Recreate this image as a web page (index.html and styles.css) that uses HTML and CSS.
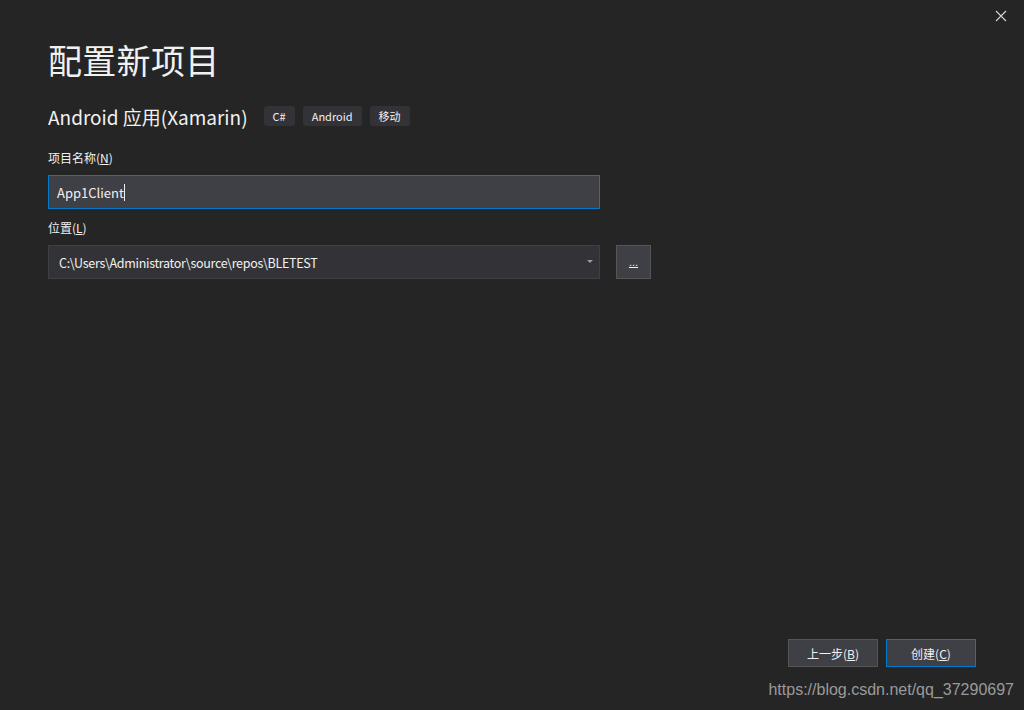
FILE: index.html
```html
<!DOCTYPE html>
<html lang="zh-CN">
<head>
    <meta charset="UTF-8">
    <title>配置新项目</title>
    <link rel="stylesheet" href="styles.css">
</head>
<body>
    <div class="dialog">
        <div class="topbar">
            <svg class="close" width="12" height="12" viewBox="0 0 12 12">
                <path d="M1 1 L11 11 M11 1 L1 11" stroke="#d0d0d0" stroke-width="1.2" fill="none"/>
            </svg>
        </div>

        <div class="content">
            <h1>配置新项目</h1>

            <div class="subtitle">
                <h2>Android 应用(Xamarin)</h2>
                <span class="tag">C#</span>
                <span class="tag">Android</span>
                <span class="tag">移动</span>
            </div>

            <div class="form-group first">
                <label>项目名称(<u>N</u>)</label>
                <div class="input active">App1Client<span class="caret"></span></div>
            </div>

            <div class="form-group">
                <label>位置(<u>L</u>)</label>
                <div class="row">
                    <div class="input combo">
                        <span>C:\Users\Administrator\source\repos\BLETEST</span>
                        <svg width="6" height="4" viewBox="0 0 6 4"><path d="M0 0 L6 0 L3 3 Z" fill="#9a9a9a"/></svg>
                    </div>
                    <button class="browse"><u>...</u></button>
                </div>
            </div>
        </div>

        <div class="footer">
            <button class="btn">上一步(<u>B</u>)</button>
            <button class="btn primary">创建(<u>C</u>)</button>
        </div>
        <div class="watermark">https://blog.csdn.net/qq_37290697</div>
    </div>
</body>
</html>
```

FILE: styles.css
```css
body {
    margin: 0;
    background-color: #252526;
    color: #f1f1f1;
    font-family: "Noto Sans CJK SC", "Noto Sans", sans-serif;
}
.dialog {
    height: 710px;
    display: flex;
    flex-direction: column;
    overflow: hidden;
}
.topbar {
    height: 32px;
    display: flex;
    justify-content: flex-end;
    align-items: center;
    padding-right: 17px;
}
.close {
    display: block;
}
.content {
    padding-left: 48px;
    flex: 1;
}
h1 {
    margin: 5px 0 0;
    font-size: 34px;
    font-weight: normal;
    line-height: 46px;
    letter-spacing: 0.3px;
}
.subtitle {
    display: flex;
    align-items: center;
    margin-top: 18px;
    height: 30px;
}
h2 {
    margin: 0 16px 0 0;
    font-size: 19px;
    font-weight: normal;
}
.tag {
    background-color: #333337;
    border-radius: 3px;
    font-size: 11px;
    padding: 0 9px;
    height: 20px;
    line-height: 20px;
    margin-right: 8px;
}
.form-group {
    margin-top: 11px;
}
.form-group.first {
    margin-top: 19px;
}
label {
    display: block;
    font-size: 12px;
    line-height: 16px;
    margin-bottom: 9px;
}
.input {
    box-sizing: border-box;
    width: 552px;
    height: 34px;
    background-color: #333337;
    border: 1px solid #3f3f46;
    display: flex;
    align-items: center;
    padding-left: 8px;
    font-size: 13px;
}
.input.active {
    background-color: #3f3f46;
    border-color: #007acc;
}
.caret {
    display: inline-block;
    width: 1px;
    height: 17px;
    background-color: #f1f1f1;
}
.row {
    display: flex;
    gap: 16px;
}
.combo {
    justify-content: space-between;
    padding-left: 10px;
    padding-right: 6px;
    font-size: 12.5px;
    letter-spacing: -0.3px;
}
.browse {
    width: 35px;
    height: 34px;
    background-color: #3f3f46;
    border: 1px solid #555555;
    color: #f1f1f1;
    font-size: 11px;
    padding: 0;
}
.footer {
    display: flex;
    justify-content: flex-end;
    gap: 8px;
    padding-right: 48px;
}
.btn {
    width: 90px;
    height: 28px;
    background-color: #3f3f46;
    border: 1px solid #555555;
    color: #f1f1f1;
    font-family: "Noto Sans CJK SC", sans-serif;
    font-size: 12px;
    padding: 0;
}
.btn.primary {
    border-color: #007acc;
}
.watermark {
    text-align: right;
    padding-right: 10px;
    margin-top: 14px;
    height: 29px;
    font-family: "Liberation Sans", Arial, sans-serif;
    font-size: 16px;
    color: #9a9a9a;
}
```
